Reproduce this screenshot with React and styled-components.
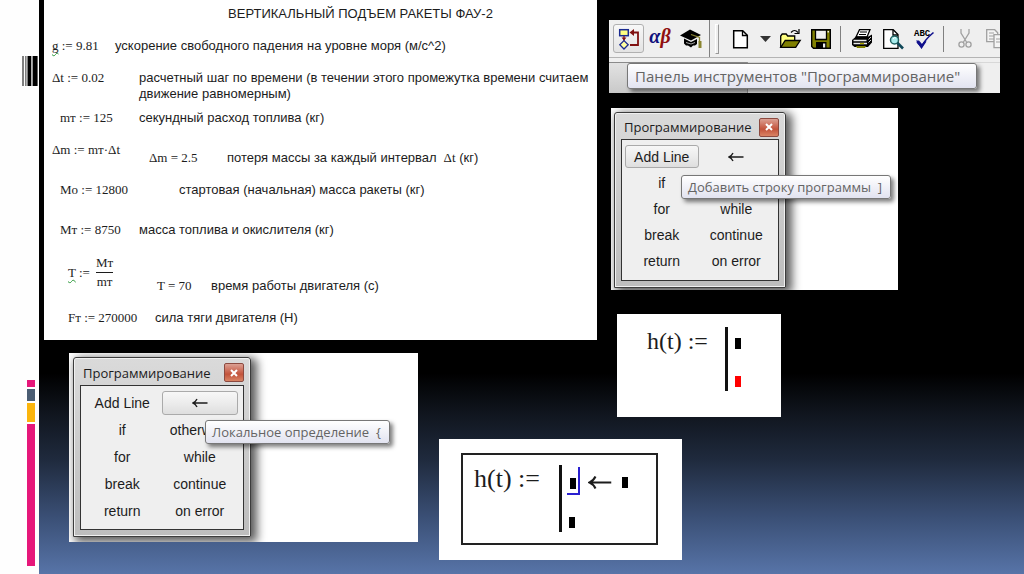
import React from "react";
import styled, { createGlobalStyle, css } from "styled-components";

const fonts = {
  sans: '"Liberation Sans", Arial, sans-serif',
  serif: '"Liberation Serif", "Times New Roman", serif',
  ui: '"Open Sans", "Noto Sans", sans-serif',
};

const GlobalStyle = createGlobalStyle`
  * {
    box-sizing: border-box;
  }

  body {
    margin: 0;
    background-color: #000;
    overflow: hidden;
  }

  button {
    margin: 0;
    padding: 0;
    border: none;
    background: none;
    color: inherit;
    font: inherit;
    cursor: pointer;
  }
`;

const Slide = styled.div`
  display: flex;
  min-height: 100vh;
  font-family: ${fonts.sans};
  color: #1c1c1c;
  background: linear-gradient(
    to bottom,
    #000 65%,
    #10151e 72%,
    #1f2a3d 80%,
    #3a4f75 90%,
    #5774a8 100%
  );
`;

/* left rail */

const Rail = styled.aside`
  flex: 0 0 39px;
  padding: 56px 1px 8px 0;
  display: flex;
  flex-direction: column;
  align-items: flex-end;
  justify-content: space-between;
  background-color: #fefefe;
`;

const Accents = styled.div`
  width: 8px;
  margin-right: 3px;
  display: flex;
  flex-direction: column;
  gap: 2px;
`;

const Accent = styled.span`
  height: ${({ $size }) => $size}px;
  background-color: ${({ $color }) => $color};
`;

/* board */

const Board = styled.main`
  flex: 1;
  min-width: 0;
  padding-left: 5px;
  display: grid;
  grid-template-columns: minmax(0, 553fr) minmax(0, 415fr);
  grid-template-rows: auto 1fr;
  column-gap: 12px;
  row-gap: 13px;
`;

const Side = styled.div`
  grid-column: 2;
  grid-row: 1 / 3;
  padding: 20px 24px 0 0;
  display: flex;
  flex-direction: column;
  align-items: flex-start;
`;

const Bottom = styled.div`
  grid-column: 1 / 3;
  grid-row: 2;
  padding-left: 25px;
  display: flex;
  align-items: flex-start;
  gap: 21px;
`;

const Shot = styled.section`
  background-color: #fff;
`;

/* worksheet */

const Worksheet = styled(Shot)`
  grid-column: 1;
  grid-row: 1;
  padding: 6px 8px 14px;
  font-size: 13px;
  line-height: 16px;
`;

const Title = styled.h1`
  margin: 0;
  padding-left: 80px;
  text-align: center;
  font-size: 13px;
  font-weight: normal;
  line-height: 16px;
`;

const Line = styled.div`
  display: flex;
  margin-top: ${({ $space = 16 }) => $space}px;
  padding-left: ${({ $indent = 0 }) => $indent}px;
  min-height: ${({ $height = 16 }) => $height}px;
`;

const math = css`
  font-family: ${fonts.serif};
  white-space: nowrap;
`;

const Term = styled.span`
  ${math}
  flex: 0 0 ${({ $width }) => $width}px;
  align-self: ${({ $low }) => ($low ? "flex-end" : "flex-start")};
`;

const FractionTerm = styled(Term)`
  display: flex;
  align-items: center;
  gap: 6px;
`;

const Inline = styled.span`
  ${math}
`;

const Note = styled.p`
  margin: 0;
  align-self: ${({ $low }) => ($low ? "flex-end" : "flex-start")};
`;

const Warned = styled.span`
  text-decoration: underline wavy #2e9a3c 1px;
  text-decoration-skip-ink: none;
  text-underline-offset: 2px;
`;

const Fraction = styled.span`
  display: flex;
  flex-direction: column;
  align-items: center;
  line-height: 18px;

  span:first-child {
    border-bottom: 1px solid #1c1c1c;
  }
`;

/* tooltips */

const Tooltip = styled.div`
  position: absolute;
  z-index: 1;
  left: ${({ $left }) => $left}px;
  top: ${({ $top }) => $top}px;
  padding: ${({ $large }) => ($large ? "0 16px 0 7px" : "0 8px 0 6px")};
  border: 1px solid #777;
  border-radius: 3px;
  background: linear-gradient(to bottom, #fff, #e2e3f0);
  box-shadow: 3px 3px 4px rgba(0, 0, 0, 0.5);
  color: #646464;
  font-family: ${fonts.ui};
  font-size: ${({ $large }) => ($large ? 15 : 13)}px;
  line-height: ${({ $large }) => ($large ? 24 : 22)}px;
  white-space: pre;
`;

/* toolbar */

const ToolbarShot = styled(Shot)`
  position: relative;
  align-self: stretch;
  background-color: #efefef;
`;

const ToolbarClip = styled.div`
  overflow: hidden;
`;

const Tools = styled.div`
  display: flex;
  align-items: center;
  height: 37px;
  padding-left: 4px;
`;

const Tool = styled.button`
  flex: 0 0 ${({ $narrow }) => ($narrow ? 18 : 31)}px;
  height: 29px;
  display: flex;
  align-items: center;
  justify-content: center;
  ${({ $active }) =>
    $active &&
    css`
      border: 1px solid #b0b0b0;
      border-radius: 3px;
      background: linear-gradient(to bottom, #f8f8f8, #e3e3e3);
    `}
`;

const Divider = styled.span`
  flex: 0 0 1px;
  align-self: ${({ $full }) => ($full ? "stretch" : "center")};
  height: ${({ $full }) => ($full ? "auto" : "26px")};
  margin: ${({ $full }) => ($full ? "0 5px 0 3px" : "0 5px 0 4px")};
  background-color: #808080;
`;

const Grip = styled.span`
  flex: 0 0 4px;
  height: 30px;
  margin-right: 6px;
  border: 1px solid #fff;
  border-right-color: #999;
  border-bottom-color: #999;
`;

const Tray = styled.div`
  height: 36px;
  border-top: 1px solid #b4b4b4;
  padding-top: 4px;
  display: flex;
`;

const TrayPart = styled.div`
  flex: 0 0 139px;
  border-top: 1px solid #8a8a8a;
  border-right: 1px solid #999;
  background: linear-gradient(to bottom, #e2e2e2, #c9c9c9);
`;

const TrayRest = styled.div`
  flex: 1;
  border-top: 1px solid #d8d8d8;
`;

/* programming palette */

const PaletteShot = styled(Shot)`
  width: ${({ $large }) => ($large ? 349 : 287)}px;
  padding: ${({ $large }) => ($large ? "4px 4px 5px" : "4px 3px 2px")};
  overflow: hidden;
`;

const PaletteWindow = styled.div`
  position: relative;
  width: ${({ $large }) => ($large ? 178 : 172)}px;
  padding: 0 6px 6px;
  border: 1px solid #3c3c3c;
  border-radius: 3px 3px 0 0;
  background: linear-gradient(to bottom, #dadada, #c8c8c8 60%, #bdbdbd);
  box-shadow: inset 0 0 0 1px #f0f0f0, 4px 3px 10px 2px rgba(0, 0, 0, 0.65);
`;

const PaletteHeader = styled.header`
  height: ${({ $large }) => ($large ? 27 : 26)}px;
  padding: 2px 0 0 3px;
  display: flex;
  align-items: center;
  justify-content: space-between;
  font-family: ${fonts.ui};
  font-size: 13px;
`;

const CloseButton = styled.button`
  width: 20px;
  height: 19px;
  display: flex;
  align-items: center;
  justify-content: center;
  border: 1px solid #8c4a40;
  border-radius: 2px;
  background: linear-gradient(to bottom, #dba093, #c85f49 50%, #c2533b 60%, #d98364);
`;

const Keys = styled.div`
  display: grid;
  grid-template-columns: 1fr 1fr;
  grid-auto-rows: ${({ $large }) => ($large ? 24 : 23)}px;
  column-gap: 1px;
  row-gap: 3px;
  padding: ${({ $large }) => ($large ? "5px 5px 6px 3px" : "5px 5px 8px 3px")};
  border: 1px solid #333;
  background-color: #efefef;
  font-size: 14px;
`;

const Key = styled.button`
  display: flex;
  align-items: center;
  justify-content: center;
  border: 1px solid transparent;
  white-space: nowrap;
  ${({ $active }) =>
    $active &&
    css`
      border-color: #aaa;
      border-radius: 3px;
      background: linear-gradient(to bottom, #f7f7f7, #ececec 50%, #dedede);
    `}
`;

/* program definitions */

const FormulaShot = styled(Shot)`
  padding: ${({ $framed }) => ($framed ? "14px 24px 15px 22px" : "13px 40px 26px 30px")};
  margin-top: ${({ $space }) => $space}px;
`;

const Formula = styled.div`
  display: flex;
  align-items: flex-start;
  font-family: ${fonts.serif};
  font-size: ${({ $framed }) => ($framed ? 26 : 24)}px;
  line-height: 28px;
  ${({ $framed }) =>
    $framed &&
    css`
      padding: 10px 28px 11px 11px;
      border: 2px solid #222;
    `}
`;

const Name = styled.span`
  width: ${({ $width }) => $width}px;
  white-space: nowrap;
`;

const Program = styled.div`
  padding: ${({ $framed }) => ($framed ? "12px 0 4px 7px" : "11px 0 4px 7px")};
  border-left: 3px solid #111;
  display: flex;
  flex-direction: column;
  gap: ${({ $framed }) => ($framed ? 29 : 27)}px;
`;

const Statement = styled.div`
  height: 11px;
  display: flex;
  align-items: center;
`;

const Placeholder = styled.span`
  flex: 0 0 6px;
  height: 11px;
  background-color: ${({ $error }) => ($error ? "#f00" : "#000")};
`;

const Cursor = styled.span`
  flex: none;
  height: 28px;
  margin: 0 8px 4px -2px;
  padding: 0 2px 4px 3px;
  display: flex;
  align-items: flex-end;
  border: 0 solid #2a20d0;
  border-width: 0 2px 2px 0;
`;

const Gap = styled.span`
  width: 10px;
`;

const SideStack = styled.div`
  padding: 15px 0 0 2px;
  display: flex;
  flex-direction: column;
  align-items: flex-start;

  ${FormulaShot} {
    margin-left: 6px;
  }
`;

function Barcode() {
  return (
    <svg width="16" height="30" viewBox="0 0 16 30" fill="#000" aria-hidden="true">
      <rect x="0.5" width="1" height="30" />
      <rect x="3.5" width="0.8" height="30" />
      <rect x="5.5" width="3.8" height="30" />
      <rect x="10.6" width="5" height="30" />
    </svg>
  );
}

function LeftArrow({ width = 16 }) {
  return (
    <svg width={width} height={(width * 10) / 16} viewBox="0 0 16 10" fill="none">
      <path d="M1 5H15.5M5 1Q3.5 4 1 5Q3.5 6 5 9" stroke="#1c1c1c" strokeWidth="1.4" />
    </svg>
  );
}

const IconSvg = styled.svg`
  overflow: visible;
`;

function Icon({ children }) {
  return (
    <IconSvg width="22" height="22" viewBox="0 0 22 22" fill="none" stroke="#000" strokeWidth="1.3">
      {children}
    </IconSvg>
  );
}

function FlowIcon() {
  return (
    <Icon>
      <rect x="1.7" y="1.7" width="8.6" height="6" fill="#ffff80" stroke="#1a2a90" strokeWidth="1.5" />
      <path d="M6 8v5" stroke="#801010" />
      <path d="M3.5 9.500h5L6 12.500z" fill="#801010" stroke="none" />
      <path d="M6 12.6l4.2 4.2L6 21l-4.2-4.2z" fill="#ffffa0" stroke="#1a2a90" />
      <path d="M12 17h8V4.5h-5" stroke="#801010" strokeWidth="1.8" />
      <path d="M11.500 4.500l4.500-3.500v7z" fill="#801010" stroke="none" />
    </Icon>
  );
}

const GreekText = styled.text`
  font-family: ${fonts.serif};
  font-size: 20px;
  font-style: italic;
  font-weight: bold;
`;

function GreekIcon() {
  return (
    <Icon>
      <GreekText x="11" y="15" textAnchor="middle" stroke="none">
        <tspan fill="#10107c">α</tspan>
        <tspan fill="#901010">β</tspan>
      </GreekText>
    </Icon>
  );
}

function CapIcon() {
  return (
    <Icon>
      <path d="M0 7.5L10 1.5L21 7L11 12.5z" fill="#000" stroke="none" />
      <path d="M4 10.500l7 3.500l6-3v5l-2 1.500h-2l-2 2l-3-2H6l-2-2z" fill="#000" stroke="none" />
      <path d="M6 14.500l5 1.500l4-1.500" stroke="#d0d0d0" strokeWidth="0.8" />
      <path d="M11 6.500l8.500 3v5" stroke="#8a8530" />
      <path d="M18.500 13h3v7h-3z" fill="#8a8530" stroke="none" />
    </Icon>
  );
}

function NewIcon() {
  return (
    <Icon>
      <path d="M3.7 2.7h9l4.6 4.6v12.4H3.7z" fill="#fff" strokeWidth="1.5" />
      <path d="M12.5 3v4.5H17" />
    </Icon>
  );
}

function CaretIcon() {
  return (
    <svg width="11" height="6" viewBox="0 0 11 6">
      <path d="M0 0h11L5.5 6z" fill="#333" />
    </svg>
  );
}

function OpenIcon() {
  return (
    <Icon>
      <path d="M1.7 19V8l1.500-2h4l1.500 2h7v4" fill="#ffff80" />
      <path d="M1.7 19.300l4.500-6.800h15l-4.500 6.800z" fill="#808000" />
      <path d="M12 4.5q3.5-4 7 0M20 1v4.5h-4.500" strokeWidth="1.2" />
    </Icon>
  );
}

function SaveIcon() {
  return (
    <Icon>
      <path d="M1.7 1.7h18.6v18.6H3.5l-1.8-1.8z" fill="#808000" strokeWidth="1.4" />
      <path d="M5.5 2h11v9.5h-11z" fill="#efefef" />
      <path d="M6 14h10.5v6.5H6z" fill="#000" stroke="none" />
      <path d="M13 15.5h2.2v4H13z" fill="#efefef" stroke="none" />
      <path d="M17.5 3H19v1.5h-1.5z" fill="#efefef" stroke="none" />
    </Icon>
  );
}

function PrintIcon() {
  return (
    <Icon>
      <path d="M5 9L8.5 1.7H19L16 9z" fill="#fff" />
      <path d="M9 4h7M8 6.5h7" strokeWidth="1" />
      <path d="M1 12l4-3.500h12.500L21 6.500v8l-4 4.500H3.500L1 17z" fill="#000" stroke="none" />
      <path d="M2.5 12.5h13M2.5 15.5H16" stroke="#e8e8e8" strokeWidth="1.3" />
      <path d="M17.5 11.5L20 9M17.5 14.5L20 12" stroke="#ccc" strokeWidth="1" />
      <path d="M5 18h10l-1 2H6z" fill="#808000" stroke="none" />
      <path d="M9 15.5h4" stroke="#b0a800" />
    </Icon>
  );
}

function PreviewIcon() {
  return (
    <Icon>
      <path d="M1.7 1.7h9.500L16 6.5v13.8H1.7z" fill="#fff" />
      <path d="M11 2v5h5" />
      <circle cx="12.5" cy="12" r="4" fill="#a8ecec" stroke="#206060" strokeWidth="1.5" />
      <path d="M11 11q1-2 3-1" stroke="#fff" strokeWidth="1" />
      <path d="M15.5 15l5.5 5.5" stroke="#104858" strokeWidth="2.6" />
    </Icon>
  );
}

const SpellText = styled.text`
  font-family: "Liberation Mono", monospace;
  font-size: 9px;
  font-weight: bold;
`;

function SpellIcon() {
  return (
    <Icon>
      <SpellText x="1" y="8" fill="#000" stroke="none">
        ABC
      </SpellText>
      <path d="M4 14l4.5 5q3-7 12-14.5" stroke="#10108c" strokeWidth="1.6" />
      <path d="M3 12.500h3l3 3.500l2.500-3l2 .5L8.500 21z" fill="#10108c" stroke="none" />
    </Icon>
  );
}

function CutIcon() {
  return (
    <Icon>
      <g stroke="#a0a0a0">
        <path d="M7 1v4l5.5 9M15 1v4l-5.5 9" />
        <circle cx="7.5" cy="16.5" r="2.6" />
        <circle cx="14.5" cy="16.5" r="2.6" />
      </g>
    </Icon>
  );
}

function CopyIcon() {
  return (
    <Icon>
      <g stroke="#a0a0a0">
        <path d="M1.7 1.7h8l3 3v9h-11z" fill="#f4f4f4" />
        <path d="M4 5h5M4 8h6M4 11h6" strokeWidth="1" />
        <path d="M9 6.7h8l3 3v10H9z" fill="#f4f4f4" />
        <path d="M11 11h6M11 14h6" strokeWidth="1" />
      </g>
    </Icon>
  );
}

function Toolbar() {
  return (
    <ToolbarShot>
      <ToolbarClip>
        <Tools role="toolbar">
          <Tool $active aria-label="Программирование">
            <FlowIcon />
          </Tool>
          <Tool aria-label="Греческие символы">
            <GreekIcon />
          </Tool>
          <Tool aria-label="Ресурсы">
            <CapIcon />
          </Tool>
          <Divider $full />
          <Grip />
          <Tool aria-label="Создать">
            <NewIcon />
          </Tool>
          <Tool $narrow aria-label="Шаблоны">
            <CaretIcon />
          </Tool>
          <Tool aria-label="Открыть">
            <OpenIcon />
          </Tool>
          <Tool aria-label="Сохранить">
            <SaveIcon />
          </Tool>
          <Divider />
          <Tool aria-label="Печать">
            <PrintIcon />
          </Tool>
          <Tool aria-label="Просмотр">
            <PreviewIcon />
          </Tool>
          <Tool aria-label="Орфография">
            <SpellIcon />
          </Tool>
          <Divider />
          <Tool aria-label="Вырезать">
            <CutIcon />
          </Tool>
          <Tool aria-label="Копировать">
            <CopyIcon />
          </Tool>
        </Tools>
        <Tray>
          <TrayPart />
          <TrayRest />
        </Tray>
      </ToolbarClip>
      <Tooltip $large $left={18} $top={43} role="tooltip">
        Панель инструментов "Программирование"
      </Tooltip>
    </ToolbarShot>
  );
}

const keys = [
  "Add Line",
  "←",
  "if",
  "otherwise",
  "for",
  "while",
  "break",
  "continue",
  "return",
  "on error",
];

function Palette({ large, active, hint, hintLeft }) {
  return (
    <PaletteShot $large={large}>
      <PaletteWindow $large={large}>
        <PaletteHeader $large={large}>
          Программирование
          <CloseButton aria-label="Закрыть">
            <svg width="8" height="8" viewBox="0 0 8 8">
              <path d="M1 1l6 6M7 1L1 7" stroke="#fff" strokeWidth="2" />
            </svg>
          </CloseButton>
        </PaletteHeader>
        <Keys $large={large}>
          {keys.map(key => (
            <Key key={key} $active={key === active} aria-label={key}>
              {key === "←" ? <LeftArrow /> : key}
            </Key>
          ))}
        </Keys>
        <Tooltip $left={hintLeft} $top={62} role="tooltip">
          {hint}
        </Tooltip>
      </PaletteWindow>
    </PaletteShot>
  );
}

function Calculations() {
  return (
    <Worksheet>
      <Title>ВЕРТИКАЛЬНЫЙ ПОДЪЕМ РАКЕТЫ ФАУ-2</Title>
      <Line>
        <Term $width={63}>
          <Warned>g</Warned> := 9.81
        </Term>
        <Note>ускорение свободного падения на уровне моря (м/с^2)</Note>
      </Line>
      <Line>
        <Term $width={87}>Δt := 0.02</Term>
        <Note>
          расчетный шаг по времени (в течении этого промежутка времени считаем
          движение равномерным)
        </Note>
      </Line>
      <Line $space={8} $indent={8}>
        <Term $width={79}>mт := 125</Term>
        <Note>секундный расход топлива (кг)</Note>
      </Line>
      <Line $height={24}>
        <Term $width={97}>Δm := mт·Δt</Term>
        <Term $width={78} $low>
          Δm = 2.5
        </Term>
        <Note $low>
          потеря массы за каждый интервал <Inline>&nbsp;Δt</Inline> (кг)
        </Note>
      </Line>
      <Line $indent={8}>
        <Term $width={119}>Mo := 12800</Term>
        <Note>стартовая (начальная) масса ракеты (кг)</Note>
      </Line>
      <Line $space={24} $indent={8}>
        <Term $width={79}>Mт := 8750</Term>
        <Note>масса топлива и окислителя (кг)</Note>
      </Line>
      <Line $indent={16} $height={40}>
        <FractionTerm $width={89}>
          <span>
            <Warned>T</Warned> :=
          </span>
          <Fraction>
            <span>Mт</span>
            <span>mт</span>
          </Fraction>
        </FractionTerm>
        <Term $width={54} $low>
          T = 70
        </Term>
        <Note $low>время работы двигателя (с)</Note>
      </Line>
      <Line $indent={16}>
        <Term $width={87}>Fт := 270000</Term>
        <Note>сила тяги двигателя (Н)</Note>
      </Line>
    </Worksheet>
  );
}

export default function App() {
  return (
    <>
      <GlobalStyle />
      <Slide>
        <Rail>
          <Barcode />
          <Accents>
            <Accent $size={7} $color="#e6177a" />
            <Accent $size={12} $color="#4b5d73" />
            <Accent $size={19} $color="#fbb50c" />
            <Accent $size={142} $color="#e6177a" />
          </Accents>
        </Rail>
        <Board>
          <Calculations />
          <Side>
            <Toolbar />
            <SideStack>
              <Palette
                active="Add Line"
                hint="Добавить строку программы  ]"
                hintLeft={66}
              />
              <FormulaShot $space={24}>
                <Formula>
                  <Name $width={78}>h(t) :=</Name>
                  <Program>
                    <Statement>
                      <Placeholder />
                    </Statement>
                    <Statement>
                      <Placeholder $error />
                    </Statement>
                  </Program>
                </Formula>
              </FormulaShot>
            </SideStack>
          </Side>
          <Bottom>
            <Palette
              large
              active="←"
              hint="Локальное определение  {"
              hintLeft={131}
            />
            <FormulaShot $framed $space={86}>
              <Formula $framed>
                <Name $width={85}>h(t) :=</Name>
                <Program $framed>
                  <Statement>
                    <Cursor>
                      <Placeholder />
                    </Cursor>
                    <LeftArrow width={24} />
                    <Gap />
                    <Placeholder />
                  </Statement>
                  <Statement>
                    <Placeholder />
                  </Statement>
                </Program>
              </Formula>
            </FormulaShot>
          </Bottom>
        </Board>
      </Slide>
    </>
  );
}
